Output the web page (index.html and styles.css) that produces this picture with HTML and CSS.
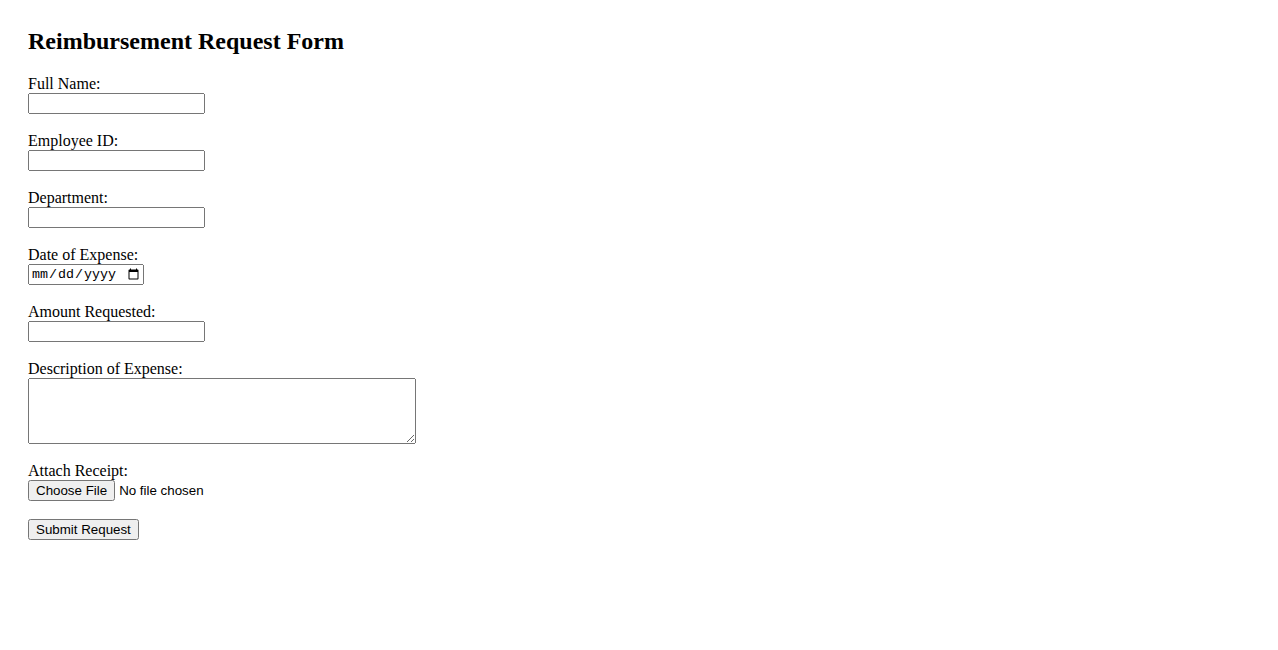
FILE: index.html
```html
<!DOCTYPE html>
<html>
<head>
<meta charset="utf-8">
<title>Reimbursement Request Form</title>
<link rel="stylesheet" href="styles.css">
</head>
<body>
<div class="page">
<h2 class="title">Reimbursement Request Form</h2>
<form class="form">
<label for="name">Full Name:</label><br>
<input class="field" type="text" id="name"><br><br>
<label for="emp">Employee ID:</label><br>
<input class="field" type="text" id="emp"><br><br>
<label for="dept">Department:</label><br>
<input class="field" type="text" id="dept"><br><br>
<label for="date">Date of Expense:</label><br>
<input class="date" type="date" id="date"><br><br>
<label for="amt">Amount Requested:</label><br>
<input class="field" type="text" id="amt"><br><br>
<label for="desc">Description of Expense:</label><br>
<textarea class="area" id="desc"></textarea><br><br>
<label for="file">Attach Receipt:</label><br>
<input class="file" type="file" id="file"><br><br>
<input class="submit" type="submit" value="Submit Request">
</form>
</div>
</body>
</html>
```
FILE: styles.css
```css
body {
  margin: 8px;
  font-family: "Liberation Serif", "Times New Roman", serif;
  font-size: 16px;
  color: #000;
  background: #fff;
}
.page {
  padding: 20px;
}
.title {
  margin: 0 0 19.92px 0;
  font-size: 24px;
  font-weight: bold;
}
.form {
  margin: 0;
}
.field {
  width: 177px;
  height: 21px;
  box-sizing: border-box;
  font-family: "Liberation Sans", Arial, sans-serif;
  font-size: 13.33px;
}
.date {
  width: 116px;
  height: 21px;
  box-sizing: border-box;
  font-family: "Liberation Mono", monospace;
  font-size: 13.33px;
}
.area {
  width: 388px;
  height: 66px;
  box-sizing: border-box;
  vertical-align: bottom;
}
.file, .submit {
  font-family: "Liberation Sans", Arial, sans-serif;
  font-size: 13.33px;
}
```
